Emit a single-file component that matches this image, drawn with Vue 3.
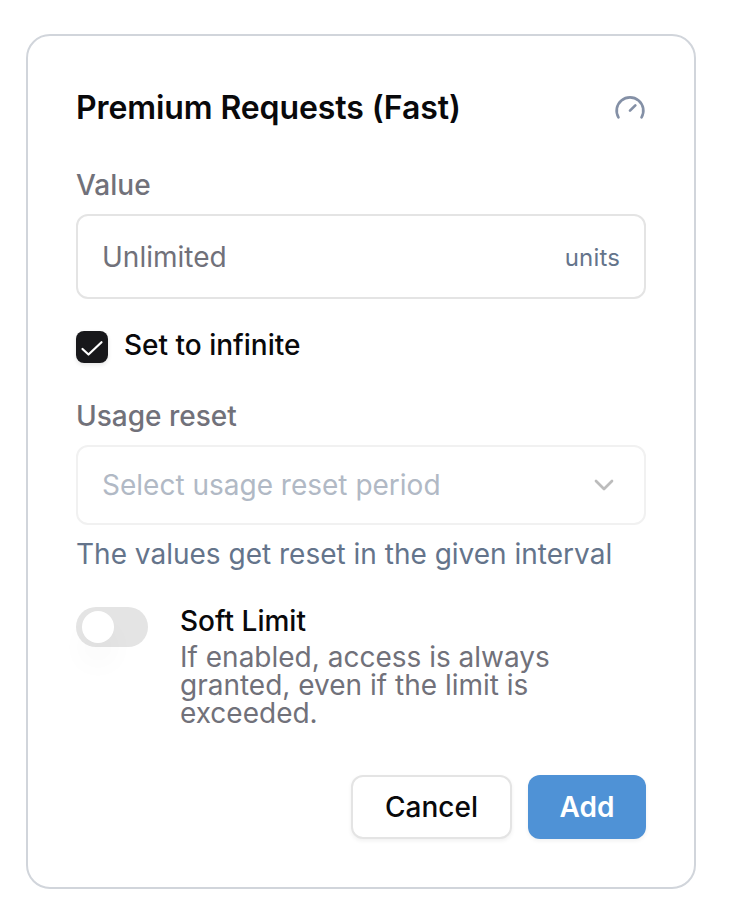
<script setup>
import { ref } from 'vue'
const infinite = ref(true)
const soft = ref(false)
</script>

<template>
  <main class="page">
    <section class="card">
      <header class="head">
        <h1>Premium Requests (Fast)</h1>
        <svg class="gauge" viewBox="0 0 24 24" width="32" height="32"><path d="m12 14 4-4M3.34 19a10 10 0 1 1 17.32 0" /></svg>
      </header>
      <label class="label">Value</label>
      <div class="field value"><span>Unlimited</span><span class="unit">units</span></div>
      <div class="check" @click="infinite = !infinite">
        <span class="box"><svg v-if="infinite" viewBox="0 0 32 32" width="32" height="32"><path d="m6.500 18 6 5.500L25.500 11.200" /></svg></span>
        <span class="checktext">Set to infinite</span>
      </div>
      <label class="label reset">Usage reset</label>
      <div class="field select"><span>Select usage reset period</span>
        <svg viewBox="0 0 32 32" width="32" height="32"><path d="m8 12 8 8 8-8" /></svg>
      </div>
      <p class="hint">The values get reset in the given interval</p>
      <div class="soft">
        <button class="switch" :class="{ on: soft }" aria-label="Soft Limit" @click="soft = !soft"><i></i></button>
        <div class="softtext"><h2>Soft Limit</h2><p>If enabled, access is always<br>granted, even if the limit is<br>exceeded.</p></div>
      </div>
      <footer class="actions"><button class="btn cancel">Cancel</button><button class="btn add">Add</button></footer>
    </section>
  </main>
</template>

<style>
body { background: #fff; }
</style>
<style scoped>
* { box-sizing: border-box; }
h1, h2, p { margin: 0; }
.page { height: 908px; padding: 34px 36px 0 26px; font-family: Inter, sans-serif; font-size: 28px; font-weight: 500; color: #09090b; }
.card { height: 855px; border: 2px solid #d1d5db; border-radius: 24px; padding: 48px; }
.head { display: flex; justify-content: space-between; align-items: center; height: 48px; }
h1 { font-size: 32px; font-weight: 600; line-height: 48px; letter-spacing: -0.1px; }
svg { fill: none; stroke-linecap: round; stroke-linejoin: round; flex: none; display: block; }
.gauge { stroke: #8490a6; stroke-width: 2; }
.label { display: block; margin-top: 38px; line-height: 30px; color: #71717a; }
.field { display: flex; justify-content: space-between; align-items: center; border: 2px solid #e4e4e4; border-radius: 12px; padding: 0 24px; font-weight: 400; color: #71717a; }
.value { height: 85px; margin-top: 14px; }
.unit { padding-top: 2px; font-size: 24px; letter-spacing: 0.15px; color: #64748b; }
.check { display: flex; align-items: flex-start; gap: 16px; margin-top: 30px; height: 34px; }
.box { width: 32px; height: 32px; margin-top: 2px; border-radius: 8px; background: #18181b; box-shadow: 0 2px 4px rgba(0,0,0,.1); }
.checktext { line-height: 32px; }
.box svg { stroke: #fff; stroke-width: 2.2; }
.reset { margin-top: 38px; }
.select { height: 80px; margin-top: 14px; border-color: #f1f1f1; color: #b1b9c5; }
.select svg { stroke: #bcbcbc; stroke-width: 2.7; }
.hint { margin-top: 9px; line-height: 40px; font-weight: 400; color: #64748b; }
.soft { display: flex; gap: 32px; margin-top: 33px; }
.switch { width: 72px; height: 40px; padding: 4px 6px; border: 0; border-radius: 20px; background: #e4e4e4; }
.switch i { display: block; width: 32px; height: 32px; border-radius: 50%; background: #fff; box-shadow: 0 20px 30px rgba(0,0,0,.035); }
.switch.on { background: #18181b; }
.switch.on i { margin-left: 28px; }
.softtext h2 { font-size: 28px; line-height: 28px; font-weight: 500; }
.softtext p { margin-top: 8px; line-height: 28px; font-weight: 400; color: #71717a; }
.actions { display: flex; justify-content: flex-end; gap: 16px; margin-top: 48px; }
.btn { height: 64px; border-radius: 12px; font: 500 28px Inter, sans-serif; padding: 0; box-shadow: 0 2px 4px rgba(0,0,0,.06); }
.cancel { width: 161px; border: 2px solid #e4e4e4; background: #fff; color: #09090b; }
.add { width: 118px; border: 0; background: #4f92d6; color: #fff; font-weight: 600; }
</style>
